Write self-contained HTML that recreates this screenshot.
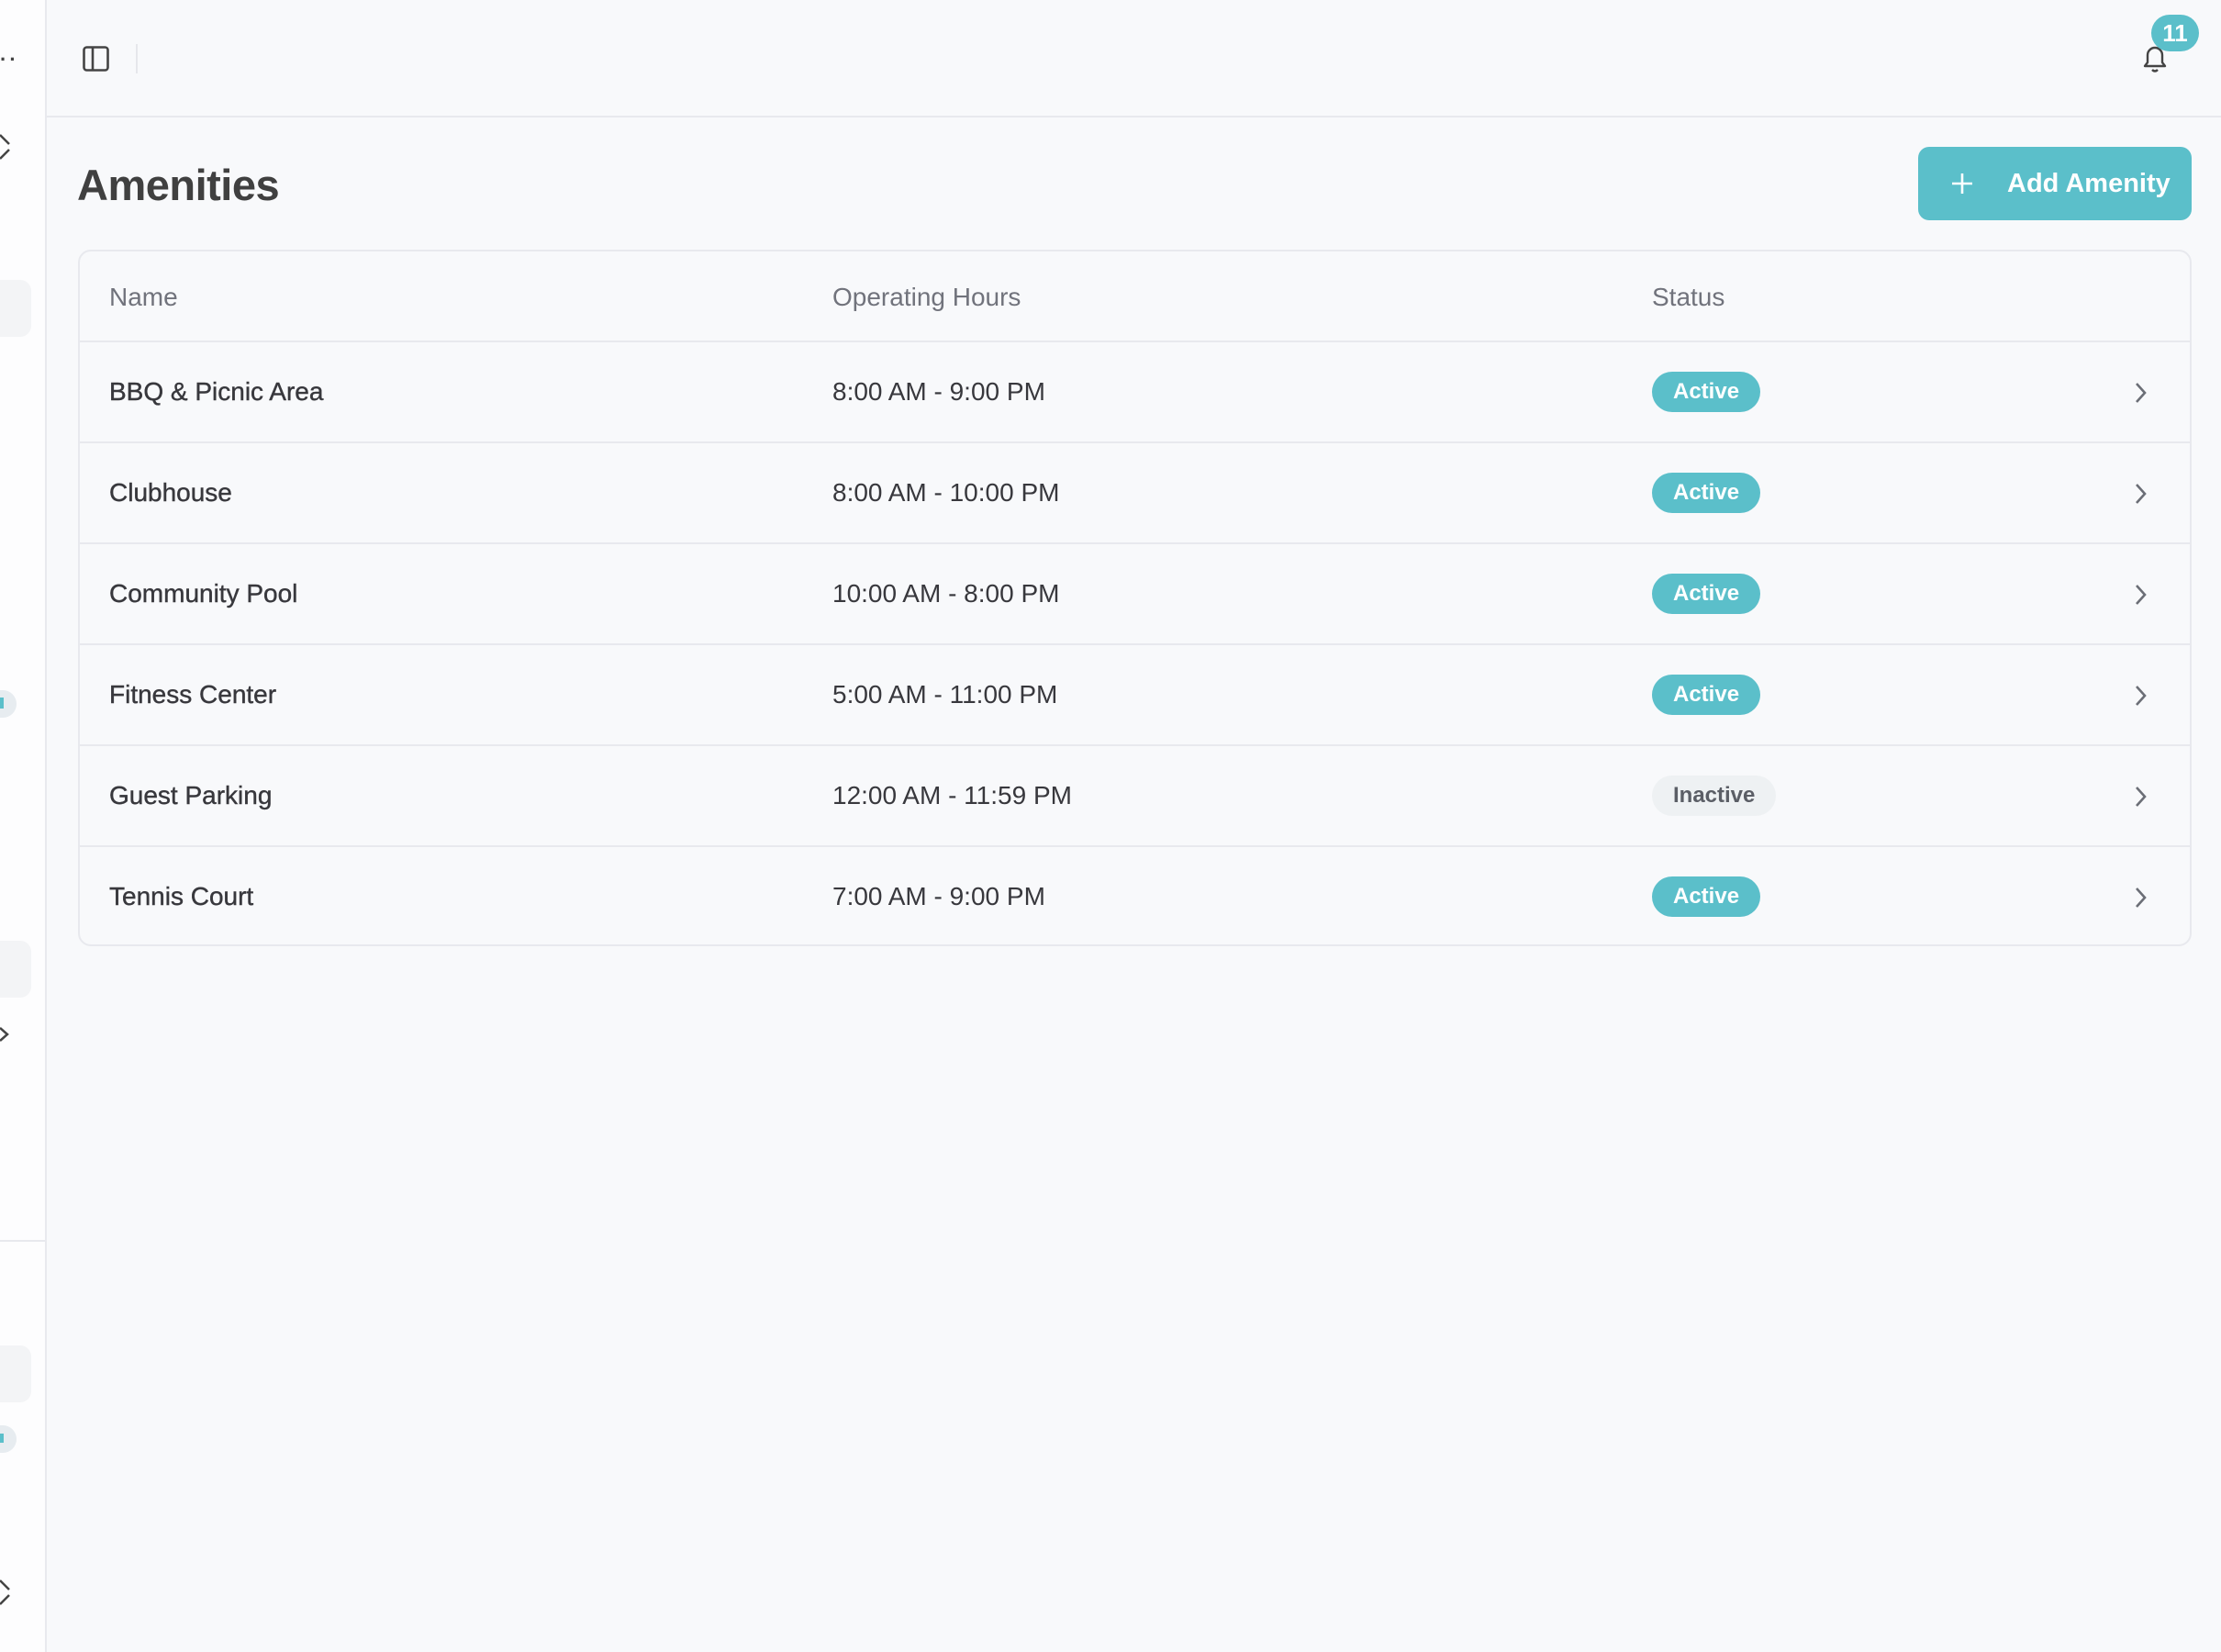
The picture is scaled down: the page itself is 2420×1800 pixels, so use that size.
<!DOCTYPE html>
<html><head><meta charset="utf-8"><style>
*{box-sizing:border-box;margin:0;padding:0}
body{width:2420px;height:1800px;background:#f8f9fb;font-family:"Liberation Sans",sans-serif;position:relative;overflow:hidden;color:#3b3b40}
.sb{position:absolute;left:0;top:0;width:51px;height:1800px;background:#fdfdfe;border-right:2px solid #e8e9ee}
.abs{position:absolute}
.hdr{position:absolute;left:51px;top:0;right:0;height:128px;border-bottom:2px solid #e8e9ee}
h1{position:absolute;left:84px;top:174px;font-size:47px;font-weight:bold;color:#404040;letter-spacing:-0.5px}
.btn{position:absolute;left:2090px;top:160px;width:298px;height:80px;background:#5bbfca;border-radius:12px;color:#fff;font-size:29px;font-weight:bold}
.card{position:absolute;left:85px;top:272px;width:2303px;height:759px;border:2px solid #e8e9ee;border-radius:14px;overflow:hidden}
.row{position:absolute;left:0;right:0;height:110px;border-top:2px solid #e8e9ee}
.row span{position:absolute;top:50%;transform:translateY(-50%);font-size:28px}
.th{color:#71737c}
.n{left:32px;color:#38383d;-webkit-text-stroke:0.4px #38383d}
.h{left:820px;color:#38383d}
.b{left:1713px;height:44px;line-height:44px;padding:0 23px;border-radius:22px;background:#5bbfca;color:#fff;font-weight:bold;font-size:24px!important}
.b.i{background:#eef1f3;color:#5b5e66}
.row svg{position:absolute;left:2236px;top:42px}
</style></head><body>
<div class="sb">
<div class="abs" style="left:0;top:52px;font-size:22px;color:#444;letter-spacing:3px;font-weight:bold">··</div>
<svg class="abs" style="left:0;top:145px" width="14" height="30"><path d="M0 2 L10 12 M0 28 L10 18" stroke="#444" stroke-width="2.5" fill="none"/></svg>
<div class="abs" style="left:-20px;top:305px;width:54px;height:62px;background:#f3f4f6;border-radius:12px"></div>
<div class="abs" style="left:-20px;top:752px;width:38px;height:30px;background:#e7ecf0;border-radius:15px"></div>
<div class="abs" style="left:0;top:760px;width:4px;height:12px;background:#5bbfca"></div>
<div class="abs" style="left:-20px;top:1025px;width:54px;height:62px;background:#f3f4f6;border-radius:12px"></div>
<svg class="abs" style="left:0;top:1118px" width="12" height="18"><path d="M0 2 L8 9 L0 16" stroke="#444" stroke-width="2.5" fill="none"/></svg>
<div class="abs" style="left:0;top:1351px;width:51px;height:2px;background:#e8e9ee"></div>
<div class="abs" style="left:-20px;top:1466px;width:54px;height:62px;background:#f3f4f6;border-radius:12px"></div>
<div class="abs" style="left:-20px;top:1553px;width:38px;height:30px;background:#e7ecf0;border-radius:15px"></div>
<div class="abs" style="left:0;top:1562px;width:4px;height:10px;background:#5bbfca"></div>
<svg class="abs" style="left:0;top:1720px" width="14" height="30"><path d="M0 2 L10 12 M0 28 L10 18" stroke="#444" stroke-width="2.5" fill="none"/></svg>
</div>
<div class="hdr"></div>
<svg class="abs" style="left:90px;top:50px" width="30" height="28"><rect x="1.5" y="1.5" width="26" height="25" rx="3" stroke="#444" stroke-width="2.6" fill="none"/><line x1="11" y1="2" x2="11" y2="26" stroke="#444" stroke-width="2.6"/></svg>
<div class="abs" style="left:148px;top:48px;width:2px;height:32px;background:#e6e7eb"></div>
<svg class="abs" style="left:2333px;top:48px" width="30" height="32"><path d="M4 24 L7 20 L7 12 A8 8 0 0 1 23 12 L23 20 L26 24 Z" stroke="#444" stroke-width="2.4" fill="none" stroke-linejoin="round"/><path d="M12 28 Q15 31 18 28" stroke="#444" stroke-width="2.4" fill="none"/></svg>
<div class="abs" style="left:2344px;top:16px;width:52px;height:40px;border-radius:20px;background:#5bbfca;color:#fff;font-weight:bold;font-size:26px;text-align:center;line-height:40px">11</div>
<h1>Amenities</h1>
<div class="btn"><svg class="abs" style="left:36px;top:28px" width="24" height="24"><path d="M12 1V23M1 12H23" stroke="#fff" stroke-width="2.6"/></svg><span class="abs" style="left:97px;top:24px">Add Amenity</span></div>
<div class="card">
<div class="row" style="top:0;height:99px;border-top:none"><span class="th" style="left:32px">Name</span><span class="th" style="left:820px">Operating Hours</span><span class="th" style="left:1713px">Status</span></div>
<div class="row" style="top:97px"><span class="n">BBQ &amp; Picnic Area</span><span class="h">8:00 AM - 9:00 PM</span><span class="b">Active</span><svg width="20" height="26"><path d="M5 3 L14 13 L5 23" stroke="#6b6e76" stroke-width="2.6" fill="none"/></svg></div>
<div class="row" style="top:207px"><span class="n">Clubhouse</span><span class="h">8:00 AM - 10:00 PM</span><span class="b">Active</span><svg width="20" height="26"><path d="M5 3 L14 13 L5 23" stroke="#6b6e76" stroke-width="2.6" fill="none"/></svg></div>
<div class="row" style="top:317px"><span class="n">Community Pool</span><span class="h">10:00 AM - 8:00 PM</span><span class="b">Active</span><svg width="20" height="26"><path d="M5 3 L14 13 L5 23" stroke="#6b6e76" stroke-width="2.6" fill="none"/></svg></div>
<div class="row" style="top:427px"><span class="n">Fitness Center</span><span class="h">5:00 AM - 11:00 PM</span><span class="b">Active</span><svg width="20" height="26"><path d="M5 3 L14 13 L5 23" stroke="#6b6e76" stroke-width="2.6" fill="none"/></svg></div>
<div class="row" style="top:537px"><span class="n">Guest Parking</span><span class="h">12:00 AM - 11:59 PM</span><span class="b i">Inactive</span><svg width="20" height="26"><path d="M5 3 L14 13 L5 23" stroke="#6b6e76" stroke-width="2.6" fill="none"/></svg></div>
<div class="row" style="top:647px"><span class="n">Tennis Court</span><span class="h">7:00 AM - 9:00 PM</span><span class="b">Active</span><svg width="20" height="26"><path d="M5 3 L14 13 L5 23" stroke="#6b6e76" stroke-width="2.6" fill="none"/></svg></div>
</div>
</body></html>
